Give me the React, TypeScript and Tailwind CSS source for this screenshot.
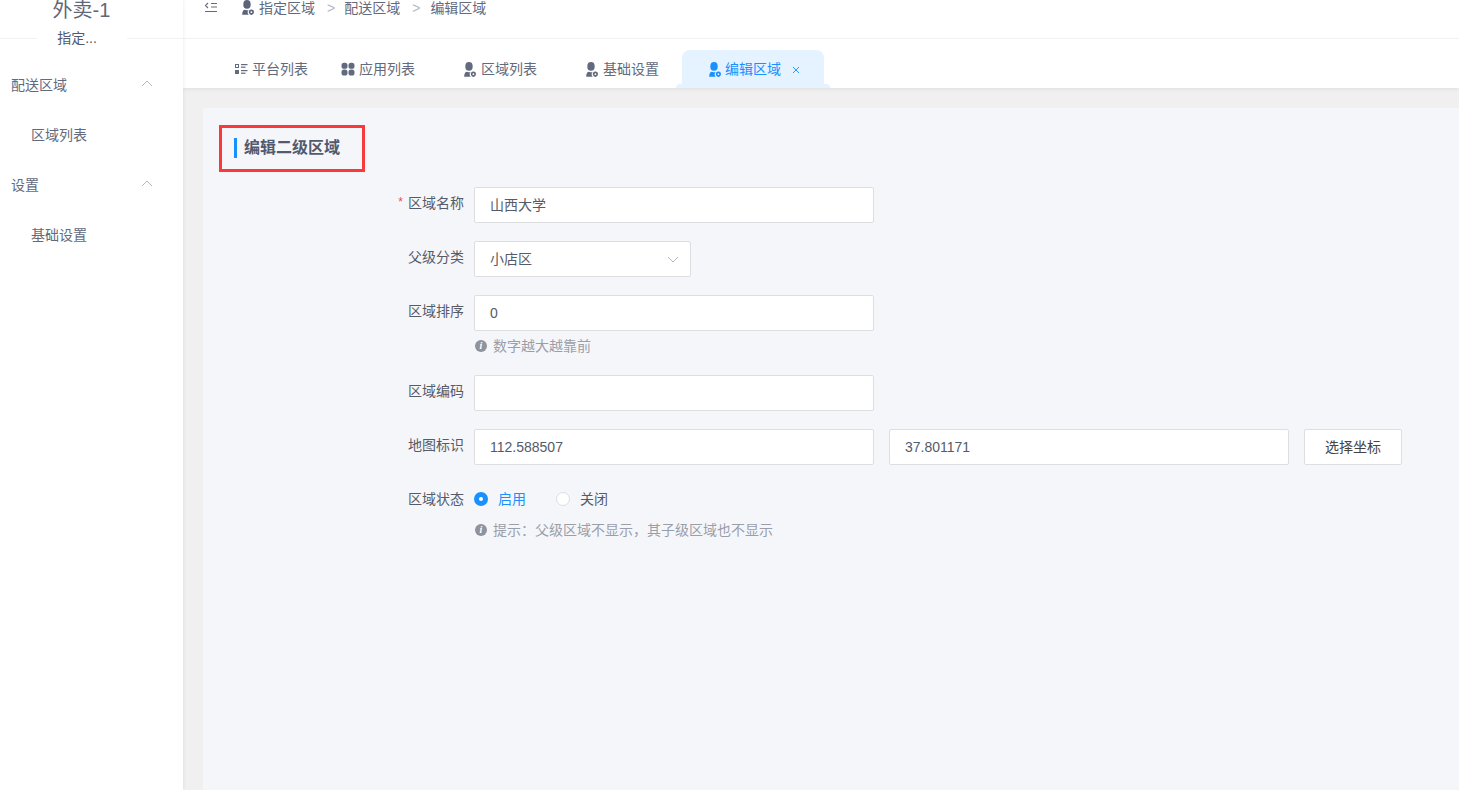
import React from "react";

const PersonPin = ({ className = "" }: { className?: string }) => (
  <svg viewBox="0 0 14 15" className={`w-[14px] h-[15px] shrink-0 ${className}`} fill="currentColor">
    <ellipse cx="6" cy="4.400" rx="3.700" ry="4.300" />
    <path d="M1.200 14.800c0-2.800.8-4.500 2.300-5 1.300.5 2.900.5 4.200.1-.7.7-1.100 1.400-1.100 2.300 0 1 .5 1.800 1.200 2.600H1.200z" />
    <path fillRule="evenodd" d="M10.400 9.600a2.600 2.600 0 0 0-2.600 2.600c0 1.200 1.600 2.600 2.600 2.800 1-.2 2.600-1.600 2.600-2.800a2.600 2.600 0 0 0-2.600-2.600zm0 1.700a.9.900 0 1 1 0 1.800.9.900 0 0 1 0-1.800z" />
  </svg>
);

const ListIcon = () => (
  <svg viewBox="0 0 14 14" className="w-[14px] h-[14px] shrink-0" fill="#626a7e">
    <path fillRule="evenodd" d="M1 2h4v4H1zm1 1v2h2V3z" />
    <rect x="7" y="2" width="6.500" height="1.200" />
    <rect x="7" y="4.600" width="4.500" height="1.200" />
    <path d="M1 8h4v4H1z" />
    <rect x="7" y="8" width="6.500" height="1.200" />
    <rect x="7" y="10.600" width="4.500" height="1.200" />
  </svg>
);

const GridIcon = () => (
  <svg viewBox="0 0 14 14" className="w-[14px] h-[14px] shrink-0" fill="#626a7e">
    <rect x="0.500" y="0.800" width="6" height="6" rx="2.600" />
    <rect x="7.500" y="0.800" width="6" height="6" rx="2.600" />
    <rect x="0.500" y="7.500" width="6" height="6" rx="2.600" />
    <rect x="7.500" y="7.500" width="6" height="6" rx="2.600" />
  </svg>
);

const Info = () => (
  <span className="w-[12px] h-[12px] rounded-full bg-[#8f939c] text-white flex items-center justify-center text-[10px] font-bold italic leading-none font-['Liberation_Serif',serif] shrink-0">
    i
  </span>
);

const Chevron = ({ up = false, cls = "" }: { up?: boolean; cls?: string }) => (
  <svg viewBox="0 0 12 7" className={`w-[12px] h-[7px] ${cls}`} fill="none" stroke="currentColor" strokeWidth="1">
    <path d={up ? "M1 6l5-5 5 5" : "M1 1l5 5 5-5"} />
  </svg>
);

const Label = ({ text, required = false }: { text: string; required?: boolean }) => (
  <div className="w-[271px] pr-[10px] flex justify-end items-start gap-[5px] text-[14px] leading-[32px] text-[#555b68] shrink-0">
    {required && <span className="text-[#e8505b] text-[12px] leading-[30px]">*</span>}
    <span>{text}</span>
  </div>
);

const Box = ({ children, cls = "w-[400px]" }: { children?: React.ReactNode; cls?: string }) => (
  <div className={`${cls} h-[36px] bg-white border border-[#dcdee2] rounded-[2px] pl-[15px] flex items-center text-[14px] text-[#555b68] shrink-0`}>
    {children}
  </div>
);

const Tab = ({ icon, text, cls }: { icon: React.ReactNode; text: string; cls: string }) => (
  <div className={`flex items-center gap-[4px] pt-[11px] text-[14px] text-[#626a7e] ${cls}`}>
    {icon}
    <span>{text}</span>
  </div>
);

export default function App() {
  return (
    <div className="h-[790px] w-full overflow-hidden flex bg-[#f0f0f0] font-['Liberation_Sans','Noto_Sans_CJK_SC',sans-serif]">
      <aside className="w-[183px] shrink-0 bg-white h-full shadow-[1px_0_3px_rgba(0,0,0,0.06)] relative z-10">
        <div className="h-[39px] border-b border-[#f2f2f2] w-full relative text-center">
          <div className="text-[20px] leading-[20px] text-[#5f677a] pr-[20px]">外卖-1</div>
          <div className="absolute left-[37px] top-[30px] w-[90px] bg-white text-[14px] leading-[16px] text-[#515a6e] text-center pr-[10px]">
            指定...
          </div>
        </div>
        <nav className="text-[14px] text-[#626a7e]">
          <div className="h-[50px] mt-[21px] pl-[11px] pr-[30px] flex items-center justify-between">
            <span>配送区域</span>
            <Chevron up cls="text-[#b5b9c2] -mt-[3px]" />
          </div>
          <div className="h-[50px] pl-[31px] flex items-center">区域列表</div>
          <div className="h-[50px] pl-[11px] pr-[30px] flex items-center justify-between">
            <span>设置</span>
            <Chevron up cls="text-[#b5b9c2] -mt-[3px]" />
          </div>
          <div className="h-[50px] pl-[31px] flex items-center">基础设置</div>
        </nav>
      </aside>

      <main className="flex-1 min-w-0 flex flex-col">
        <header className="bg-white shadow-[0_1px_4px_rgba(0,0,0,0.08)] relative">
          <div className="h-[39px] border-b border-[#f2f2f2] pl-[21px] flex items-start text-[14px] leading-[16px] text-[#626a7e]">
            <svg viewBox="0 0 14 11" className="w-[14px] h-[11px] mt-[2px] mr-[23px]" fill="none" stroke="#626a7e" strokeWidth="1.100">
              <path d="M4 1L1.500 3.500 4 6M7 1.500h6M7 5h6M1 9.500h12" />
            </svg>
            <PersonPin className="text-[#5b6478]" />
            <span className="ml-[4px]">指定区域</span>
            <span className="ml-[12px] mr-[9px] text-[#b5b9c2]">&gt;</span>
            <span>配送区域</span>
            <span className="ml-[12px] mr-[10px] text-[#b5b9c2]">&gt;</span>
            <span>编辑区域</span>
          </div>
          <div className="h-[49px] flex relative">
            <Tab icon={<ListIcon />} text="平台列表" cls="ml-[51px] w-[107px]" />
            <Tab icon={<GridIcon />} text="应用列表" cls="w-[122px]" />
            <Tab icon={<PersonPin className="text-[#626a7e]" />} text="区域列表" cls="w-[122px]" />
            <Tab icon={<PersonPin className="text-[#626a7e]" />} text="基础设置" cls="w-[97px]" />
            <div className="mt-[11px] h-[38px] w-[142px] bg-[#e5f2ff] rounded-t-[8px] relative flex items-center pl-[26px] text-[14px] text-[#1890ff] gap-[3px]">
              <PersonPin />
              <span>编辑区域</span>
              <svg viewBox="0 0 8 8" className="w-[8px] h-[8px] ml-[8px] mt-[2px]" fill="none" stroke="currentColor" strokeWidth="0.900">
                <path d="M1 1l6 6M7 1L1 7" />
              </svg>
              <span className="absolute -left-[6px] bottom-0 w-[6px] h-[4px] bg-[#e5f2ff] rounded-tl-[6px]" />
              <span className="absolute -right-[6px] bottom-0 w-[6px] h-[4px] bg-[#e5f2ff] rounded-tr-[6px]" />
            </div>
          </div>
        </header>

        <section className="flex-1 min-h-0 pt-[20px] pl-[20px]">
          <div className="h-full bg-[#f5f6fa] pt-[17px] pl-[16px]">
            <div className="w-[146px] h-[47px] border-[3px] border-[#f83a3a] flex items-center pl-[12px] gap-[7px]">
              <span className="w-[3px] h-[20px] bg-[#1890ff] -mt-[1px]" />
              <span className="text-[16px] font-bold text-[#515a6e] -mt-[2px]">编辑二级区域</span>
            </div>

            <div className="-ml-[16px] mt-[15px] flex flex-col">
              <div className="flex h-[36px]">
                <Label text="区域名称" required />
                <Box>山西大学</Box>
              </div>
              <div className="flex h-[36px] mt-[18px]">
                <Label text="父级分类" />
                <Box cls="w-[217px] pr-[11px] justify-between">
                  <span>小店区</span>
                  <Chevron cls="text-[#b5b9c2]" />
                </Box>
              </div>
              <div className="flex h-[36px] mt-[18px]">
                <Label text="区域排序" />
                <Box>0</Box>
              </div>
              <div className="flex items-center gap-[6px] pl-[272px] mt-[7px] h-[16px] text-[14px] text-[#9a9ea8]">
                <Info />
                <span>数字越大越靠前</span>
              </div>
              <div className="flex h-[36px] mt-[21px]">
                <Label text="区域编码" />
                <Box />
              </div>
              <div className="flex h-[36px] mt-[18px]">
                <Label text="地图标识" />
                <Box>112.588507</Box>
                <Box cls="w-[400px] ml-[15px]">37.801171</Box>
                <div className="w-[98px] h-[36px] ml-[15px] bg-white border border-[#dcdee2] rounded-[2px] flex items-center justify-center text-[14px] text-[#444] shrink-0">
                  选择坐标
                </div>
              </div>
              <div className="flex h-[30px] mt-[19px] items-center">
                <div className="w-[271px] pr-[10px] text-right text-[14px] text-[#555b68] shrink-0">区域状态</div>
                <span className="w-[14px] h-[14px] rounded-full bg-[#1890ff] flex items-center justify-center">
                  <span className="w-[4px] h-[4px] rounded-full bg-white" />
                </span>
                <span className="ml-[10px] text-[14px] text-[#1890ff]">启用</span>
                <span className="ml-[30px] w-[14px] h-[14px] rounded-full bg-white border border-[#dcdee2]" />
                <span className="ml-[10px] text-[14px] text-[#555b68]">关闭</span>
              </div>
              <div className="flex items-center gap-[6px] pl-[272px] mt-[8px] h-[16px] text-[14px] text-[#9a9ea8]">
                <Info />
                <span>提示：父级区域不显示，其子级区域也不显示</span>
              </div>
            </div>
          </div>
        </section>
      </main>
    </div>
  );
}
